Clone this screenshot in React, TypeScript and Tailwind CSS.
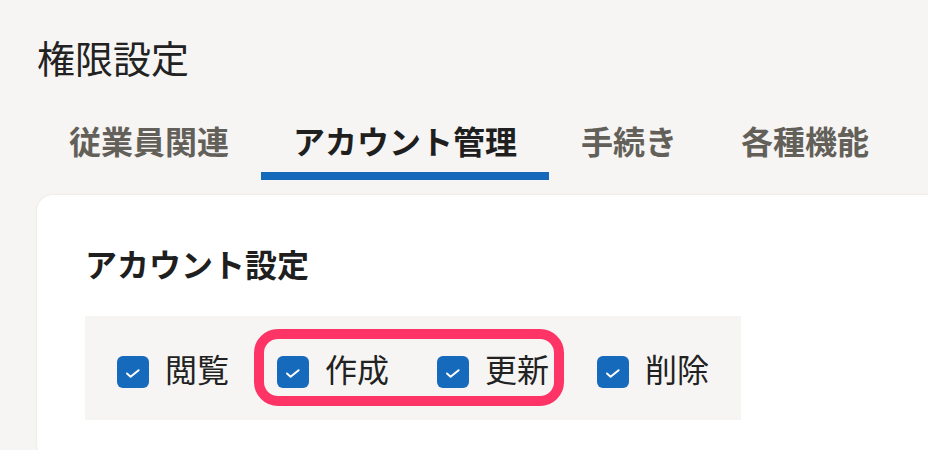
const TABS = [
  { key: "employee", label: "従業員関連" },
  { key: "account", label: "アカウント管理" },
  { key: "procedure", label: "手続き" },
  { key: "features", label: "各種機能" },
] as const;

const PERMISSIONS = [
  { key: "view", label: "閲覧" },
  { key: "create", label: "作成" },
  { key: "update", label: "更新" },
  { key: "delete", label: "削除" },
] as const;

const FONT = "font-['Noto_Sans_CJK_JP','Noto_Sans',sans-serif]";

function CheckBox(): React.ReactElement {
  return (
    <span className="flex h-8 w-8 shrink-0 items-center justify-center rounded-[6px] bg-[#156abb] mt-[7px]">
      <svg width="32" height="32" viewBox="0 0 32 32" fill="none">
        <path d="M10 17.5l3.6 3.3 8-6.6" stroke="#fff" strokeWidth="2" strokeLinecap="round" strokeLinejoin="round" />
      </svg>
    </span>
  );
}

export default function App(): React.ReactElement {
  const active = "account";
  return (
    <div className={`${FONT} h-[450px] w-[928px] overflow-hidden bg-[#f6f5f3] pl-[37px] pt-[38px] text-[#222]`}>
      <h1 className="text-[38px] font-normal leading-none">権限設定</h1>

      <div className="mt-[48px] flex">
        {TABS.map((tab) => (
          <div
            key={tab.key}
            className={`px-8 pb-4 text-[32px] font-bold leading-none border-b-8 ${
              tab.key === active ? "border-[#1569bb] text-[#1f1f1f]" : "border-transparent text-[#63605a]"
            }`}
          >
            {tab.label}
          </div>
        ))}
      </div>

      <div className="mt-[15px] w-[960px] rounded-2xl bg-white pl-12 pt-[52px] pb-10 shadow-[0_0_3px_rgba(0,0,0,0.08)]">
        <h2 className="text-[32px] font-bold leading-none text-[#1f1f1f]">アカウント設定</h2>

        <div className="relative mt-[37px] inline-flex h-[104px] items-center gap-12 bg-[#f6f5f3] px-8">
          {PERMISSIONS.map((perm) => (
            <label key={perm.key} className="flex items-center gap-4">
              <CheckBox />
              <span className="text-[32px] leading-none text-[#222]">{perm.label}</span>
            </label>
          ))}
          <div className="pointer-events-none absolute left-[169px] top-[13px] h-[77px] w-[310px] rounded-[24px] border-[10px] border-[#fe3366]" />
        </div>
      </div>
    </div>
  );
}
